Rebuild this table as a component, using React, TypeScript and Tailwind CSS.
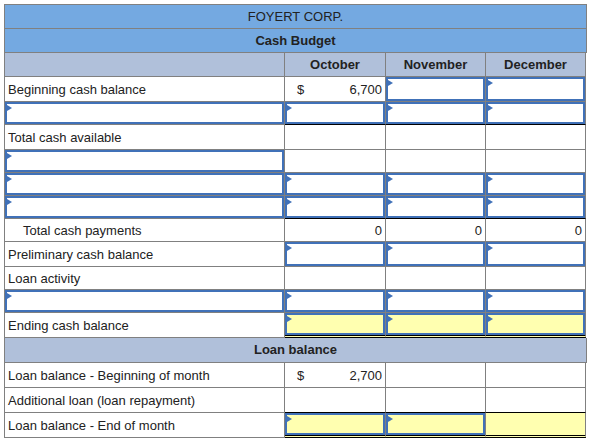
import React from "react";

const BLUE = "border-[#4071b8]";

function Flag() {
  return (
    <div className="absolute left-0 top-[1px] w-0 h-0 border-y-[3px] border-y-transparent border-l-[5px] border-l-[#4071b8]" />
  );
}

type CellProps = {
  w: string;
  input?: boolean;
  yellow?: boolean;
  bottom?: "gray" | "black" | "double";
  children?: React.ReactNode;
  className?: string;
};

function Cell({ w, input, yellow, bottom = "gray", children, className = "" }: CellProps) {
  const b =
    bottom === "black"
      ? "border-b border-b-black"
      : bottom === "double"
      ? "border-b-[3px] border-double border-b-black"
      : "border-b border-b-[#808080]";
  return (
    <div
      className={`${w} shrink-0 box-border border-r border-r-[#808080] ${b} ${
        yellow ? "bg-[#ffffb0]" : "bg-white"
      } flex`}
    >
      {input ? (
        <div className={`relative flex-1 border-2 ${BLUE}`}>
          <Flag />
        </div>
      ) : (
        <div className={`flex-1 flex items-center pt-[2px] ${className}`}>{children}</div>
      )}
    </div>
  );
}

const L = "w-[280px]";
const O = "w-[101px]";
const N = "w-[100px]";
const D = "w-[100px]";

function Row({ h, children }: { h: string; children: React.ReactNode }) {
  return <div className={`flex ${h}`}>{children}</div>;
}

function Label({ text, indent }: { text: string; indent?: boolean }) {
  return <span className={indent ? "pl-[18px]" : "pl-[3px]"}>{text}</span>;
}

function Money({ sign, value }: { sign?: boolean; value: string }) {
  return (
    <div className="flex-1 flex items-center justify-between pl-[12px] pr-[3px]">
      <span>{sign ? "$" : ""}</span>
      <span>{value}</span>
    </div>
  );
}

export default function App() {
  return (
    <div
      className="bg-white w-[593px] h-[442px] pt-[4px] pl-[4px] text-[13px] text-[#222]"
      style={{ fontFamily: '"Liberation Sans", Arial, sans-serif' }}
    >
      <div className="w-[582px] border-l border-t border-[#808080] box-content">
        <div className="h-[24px] bg-[#74a9e1] border-r border-b border-[#808080] flex items-center justify-center">
          FOYERT CORP.
        </div>
        <div className="h-[24px] bg-[#74a9e1] border-r border-b border-[#808080] flex items-center justify-center font-bold">
          Cash Budget
        </div>
        <Row h="h-[24px]">
          {[L, O, N, D].map((w, i) => (
            <div
              key={i}
              className={`${w} shrink-0 bg-[#b0c0da] border-r border-b border-[#808080] flex items-center justify-center font-bold`}
            >
              {["", "October", "November", "December"][i]}
            </div>
          ))}
        </Row>
        <Row h="h-[25px]">
          <Cell w={L}><Label text="Beginning cash balance" /></Cell>
          <Cell w={O}><Money sign value="6,700" /></Cell>
          <Cell w={N} input />
          <Cell w={D} input />
        </Row>
        <Row h="h-[23px]">
          <Cell w={L} input />
          <Cell w={O} input bottom="black" />
          <Cell w={N} input bottom="black" />
          <Cell w={D} input bottom="black" />
        </Row>
        <Row h="h-[25px]">
          <Cell w={L}><Label text="Total cash available" /></Cell>
          <Cell w={O} />
          <Cell w={N} />
          <Cell w={D} />
        </Row>
        <Row h="h-[23px]">
          <Cell w={L} input />
          <Cell w={O} />
          <Cell w={N} />
          <Cell w={D} />
        </Row>
        <Row h="h-[23px]">
          <Cell w={L} input />
          <Cell w={O} input />
          <Cell w={N} input />
          <Cell w={D} input />
        </Row>
        <Row h="h-[23px]">
          <Cell w={L} input />
          <Cell w={O} input bottom="black" />
          <Cell w={N} input bottom="black" />
          <Cell w={D} input bottom="black" />
        </Row>
        <Row h="h-[23px]">
          <Cell w={L}><Label text="Total cash payments" indent /></Cell>
          <Cell w={O}><Money value="0" /></Cell>
          <Cell w={N}><Money value="0" /></Cell>
          <Cell w={D}><Money value="0" /></Cell>
        </Row>
        <Row h="h-[25px]">
          <Cell w={L}><Label text="Preliminary cash balance" /></Cell>
          <Cell w={O} input />
          <Cell w={N} input />
          <Cell w={D} input />
        </Row>
        <Row h="h-[23px]">
          <Cell w={L}><Label text="Loan activity" /></Cell>
          <Cell w={O} />
          <Cell w={N} />
          <Cell w={D} />
        </Row>
        <Row h="h-[23px]">
          <Cell w={L} input />
          <Cell w={O} input />
          <Cell w={N} input />
          <Cell w={D} input />
        </Row>
        <Row h="h-[25px]">
          <Cell w={L}><Label text="Ending cash balance" /></Cell>
          <Cell w={O} input yellow bottom="double" />
          <Cell w={N} input yellow bottom="double" />
          <Cell w={D} input yellow bottom="double" />
        </Row>
        <div className="h-[25px] bg-[#b0c0da] border-r border-b border-[#808080] flex items-center justify-center font-bold">
          Loan balance
        </div>
        <Row h="h-[25px]">
          <Cell w={L}><Label text="Loan balance - Beginning of month" /></Cell>
          <Cell w={O}><Money sign value="2,700" /></Cell>
          <Cell w={N} />
          <Cell w={D} />
        </Row>
        <Row h="h-[25px]">
          <Cell w={L}><Label text="Additional loan (loan repayment)" /></Cell>
          <Cell w={O} bottom="black" />
          <Cell w={N} bottom="black" />
          <Cell w={D} bottom="black" />
        </Row>
        <Row h="h-[25px]">
          <Cell w={L}><Label text="Loan balance - End of month" /></Cell>
          <Cell w={O} input yellow bottom="double" />
          <Cell w={N} input yellow bottom="double" />
          <Cell w={D} yellow bottom="double" />
        </Row>
      </div>
    </div>
  );
}
